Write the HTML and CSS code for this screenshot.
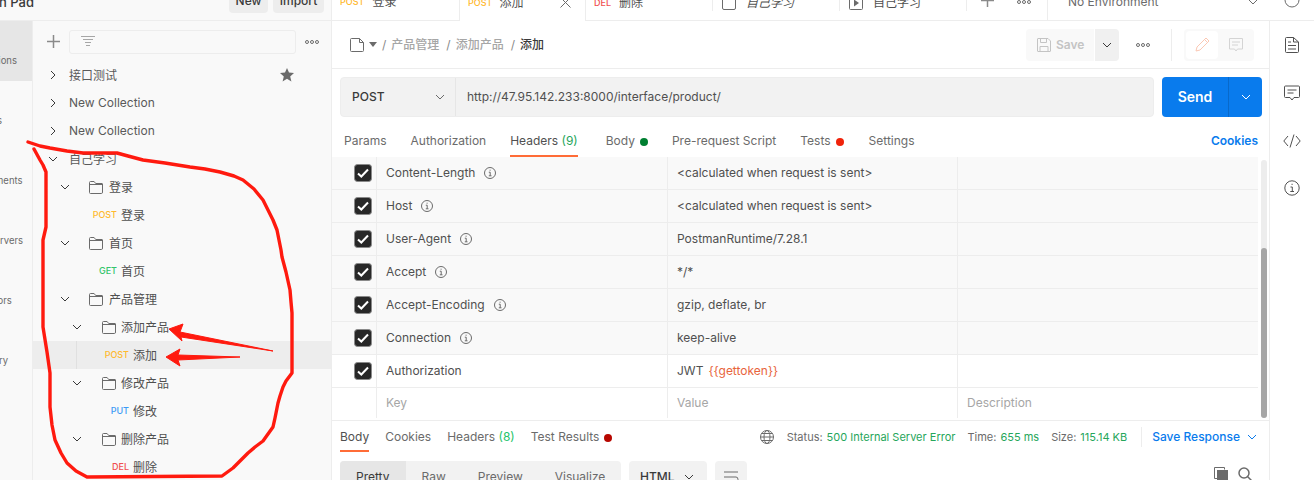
FILE: index.html
```html
<!DOCTYPE html>
<html lang="zh">
<head>
<meta charset="utf-8">
<title>Postman</title>
<link rel="stylesheet" href="styles.css">
</head>
<body>
<svg width="0" height="0" class="defs">
  <defs>
    <symbol id="chev-d" viewBox="0 0 10 10"><path d="M1 3l4 4 4-4" fill="none" stroke="currentColor" stroke-width="1"/></symbol>
    <symbol id="chev-r" viewBox="0 0 10 10"><path d="M3 1l4 4-4 4" fill="none" stroke="currentColor" stroke-width="1"/></symbol>
    <symbol id="folder" viewBox="0 0 14 14"><path d="M.5 12V2.5q0-1 1-1h3.6l1.6 2h6.3q.5 0 .5.5v8q0 1.500-1 1.500H1.500q-1 0-1-1zM.5 4.500h13" fill="none" stroke="#6b6b6b" stroke-width="1"/></symbol>
    <symbol id="info" viewBox="0 0 12 12"><circle cx="6" cy="6" r="5.500" fill="none" stroke="#6b6b6b"/><path d="M4.800 5.200H6.200V8.800M4.800 8.800H7.500M5.600 3.200h1" fill="none" stroke="#6b6b6b"/></symbol>
    <symbol id="check" viewBox="0 0 18 18"><rect x=".5" y=".5" width="17" height="17" rx="3" fill="#282828" stroke="#8a8a8a"/><path d="M4 9.500l3.300 3L14 5.500" fill="none" stroke="#fff" stroke-width="2"/></symbol>
    <symbol id="dots" viewBox="0 0 14 4"><circle cx="2" cy="2" r="1.500" fill="none" stroke="#6b6b6b"/><circle cx="7" cy="2" r="1.500" fill="none" stroke="#6b6b6b"/><circle cx="12" cy="2" r="1.500" fill="none" stroke="#6b6b6b"/></symbol>
  </defs>
</svg>
<div class="app">
  <aside class="left">
    <div class="workspace">
      <span class="ws-name">Scratch Open Pad</span>
      <div class="ws-btns"><span class="ws-btn new">New</span><span class="ws-btn imp">Import</span></div>
    </div>
    <div class="left-body">
      <nav class="rail">
        <div class="rail-item on">Collections</div>
        <div class="rail-item">APIs</div>
        <div class="rail-item">Environments</div>
        <div class="rail-item">Mock Servers</div>
        <div class="rail-item">Monitors</div>
        <div class="rail-item">History</div>
      </nav>
      <div class="panel">
        <div class="panel-tools">
          <svg class="plus" width="13" height="13" viewBox="0 0 13 13"><path d="M6.500 0v13M0 6.500h13" stroke="#8a8a8a" stroke-width="1.500"/></svg>
          <div class="filter">
            <svg width="14" height="12" viewBox="0 0 14 12"><path d="M0 .5h14M2 3.500h10M4 6.500h6M5 9.500h4" stroke="#a6a6a6"/></svg>
          </div>
          <svg class="more" width="14" height="4"><use href="#dots"/></svg>
        </div>
        <div class="tree">
          <div class="row l0"><svg class="chev"><use href="#chev-r"/></svg><span class="nm">接口测试</span>
            <svg class="star" width="14" height="14" viewBox="0 0 14 14"><path d="M7 0l2 4.600 5 .5-3.800 3.300 1.200 5L7 10.700 2.600 13.400l1.200-5L0 5.100l5-.5z" fill="#6b6b6b"/></svg></div>
          <div class="row l0"><svg class="chev"><use href="#chev-r"/></svg><span class="nm lat">New Collection</span></div>
          <div class="row l0"><svg class="chev"><use href="#chev-r"/></svg><span class="nm lat">New Collection</span></div>
          <div class="row l0"><svg class="chev"><use href="#chev-d"/></svg><span class="nm">自己学习</span></div>
          <div class="row l1"><svg class="chev"><use href="#chev-d"/></svg><svg class="fold"><use href="#folder"/></svg><span class="nm">登录</span></div>
          <div class="row r1"><span class="mth post">POST</span><span class="nm">登录</span></div>
          <div class="row l1"><svg class="chev"><use href="#chev-d"/></svg><svg class="fold"><use href="#folder"/></svg><span class="nm">首页</span></div>
          <div class="row r1"><span class="mth get">GET</span><span class="nm">首页</span></div>
          <div class="row l1"><svg class="chev"><use href="#chev-d"/></svg><svg class="fold"><use href="#folder"/></svg><span class="nm">产品管理</span></div>
          <div class="row l2"><svg class="chev"><use href="#chev-d"/></svg><svg class="fold"><use href="#folder"/></svg><span class="nm">添加产品</span></div>
          <div class="row sel"><div class="guide"><span class="mth post">POST</span><span class="nm">添加</span></div></div>
          <div class="row l2"><svg class="chev"><use href="#chev-d"/></svg><svg class="fold"><use href="#folder"/></svg><span class="nm">修改产品</span></div>
          <div class="row r2"><span class="mth put">PUT</span><span class="nm">修改</span></div>
          <div class="row l2"><svg class="chev"><use href="#chev-d"/></svg><svg class="fold"><use href="#folder"/></svg><span class="nm">删除产品</span></div>
          <div class="row r2"><span class="mth del">DEL</span><span class="nm">删除</span></div>
        </div>
      </div>
    </div>
  </aside>
  <main class="main">
    <div class="tabs">
      <div class="tab w1"><span class="tm post">POST</span><span>登录</span></div>
      <div class="tab active"><span class="tm post">POST</span><span>添加</span>
        <svg class="tab-x" width="11" height="11" viewBox="0 0 11 11"><path d="M.5.500l10 10M10.500.500l-10 10" stroke="#6b6b6b"/></svg></div>
      <div class="tab w2"><span class="tm del">DEL</span><span>删除</span></div>
      <div class="tab w3"><svg class="tab-ic" width="14" height="14" viewBox="0 0 14 14"><rect x=".5" y=".5" width="13" height="13" rx="1.500" fill="none" stroke="#6b6b6b"/></svg><em>自己学习</em></div>
      <div class="tab w3"><svg class="tab-ic" width="14" height="14" viewBox="0 0 14 14"><rect x=".5" y=".5" width="13" height="13" rx="1" fill="none" stroke="#6b6b6b"/><path d="M5 3.500l5 3.500-5 3.500z" fill="#6b6b6b"/></svg><span>自己学习</span></div>
      <div class="tab-add">
        <svg width="13" height="13" viewBox="0 0 13 13"><path d="M6.500 0v13M0 6.500h13" stroke="#8a8a8a" stroke-width="1.500"/></svg>
        <svg class="tab-more" width="14" height="4"><use href="#dots"/></svg>
      </div>
      <div class="envsel">
        <span>No Environment</span>
        <svg class="env-chev"><use href="#chev-d"/></svg>
      </div>
      <div class="eye"><svg width="16" height="16" viewBox="0 0 16 16"><circle cx="8" cy="8" r="7" fill="none" stroke="#6b6b6b"/></svg></div>
    </div>
    <div class="below">
      <section class="content">
        <div class="crumbs">
          <svg class="doc" width="14" height="14" viewBox="0 0 14 14"><path d="M.5 1.500q0-1 1-1h8l4 4v8q0 1-1 1h-11q-1 0-1-1zM9.500.500v4h4" fill="none" stroke="#6b6b6b"/></svg>
          <span class="caret"></span>
          <span class="sep">/</span><span class="crumb">产品管理</span>
          <span class="sep">/</span><span class="crumb">添加产品</span>
          <span class="sep">/</span><span class="crumb cur">添加</span>
          <div class="actions">
            <div class="save"><svg width="14" height="14" viewBox="0 0 14 14"><path d="M.5 1q0-.5.500-.5h10l2.500 2.500v10q0 .5-.5.500H1q-.5 0-.5-.5zM3.500.500v4h6v-4M3 13.500v-5h8v5" fill="none" stroke="#c4c4c4"/></svg><span>Save</span></div>
            <div class="save-arrow"><svg class="chev"><use href="#chev-d"/></svg></div>
            <svg class="act-more" width="14" height="4"><use href="#dots"/></svg>
            <div class="act-div"></div>
            <div class="modes">
              <div class="mode on"><svg width="15" height="15" viewBox="0 0 15 15"><path d="M1 14l1-4L11 1l3 3-9 9zM9.500 2.500l3 3" fill="none" stroke="#fbc8b4"/></svg></div>
              <div class="mode"><svg width="14" height="14" viewBox="0 0 14 14"><path d="M.5.500h13v10.500H8.500L7 13l-1.500-2H.5zM3 4h8M3 7h6" fill="none" stroke="#d4d4d4"/></svg></div>
            </div>
          </div>
        </div>
        <div class="urlrow">
          <div class="urlbox">
            <div class="method"><b>POST</b><svg class="chev"><use href="#chev-d"/></svg></div>
            <div class="url">http://47.95.142.233:8000/interface/product/</div>
          </div>
          <div class="send"><span class="send-l">Send</span><span class="send-r"><svg class="chev"><use href="#chev-d"/></svg></span></div>
        </div>
        <div class="reqtabs">
          <span class="rt p1">Params</span>
          <span class="rt p2">Authorization</span>
          <span class="rt p3 cur">Headers <i class="cnt">(9)</i></span>
          <span class="rt p4">Body<i class="dot green"></i></span>
          <span class="rt p5">Pre-request Script</span>
          <span class="rt p6">Tests<i class="dot red"></i></span>
          <span class="rt">Settings</span>
          <span class="cookies">Cookies</span>
        </div>
        <div class="tablewrap">
          <div class="table">
            <div class="tr"><div class="c0"><svg class="cb"><use href="#check"/></svg></div><div class="c1">Content-Length<svg class="inf"><use href="#info"/></svg></div><div class="c2">&lt;calculated when request is sent&gt;</div><div class="c3"></div></div>
            <div class="tr"><div class="c0"><svg class="cb"><use href="#check"/></svg></div><div class="c1">Host<svg class="inf"><use href="#info"/></svg></div><div class="c2">&lt;calculated when request is sent&gt;</div><div class="c3"></div></div>
            <div class="tr"><div class="c0"><svg class="cb"><use href="#check"/></svg></div><div class="c1">User-Agent<svg class="inf"><use href="#info"/></svg></div><div class="c2">PostmanRuntime/7.28.1</div><div class="c3"></div></div>
            <div class="tr"><div class="c0"><svg class="cb"><use href="#check"/></svg></div><div class="c1">Accept<svg class="inf"><use href="#info"/></svg></div><div class="c2">*/*</div><div class="c3"></div></div>
            <div class="tr"><div class="c0"><svg class="cb"><use href="#check"/></svg></div><div class="c1">Accept-Encoding<svg class="inf"><use href="#info"/></svg></div><div class="c2">gzip, deflate, br</div><div class="c3"></div></div>
            <div class="tr"><div class="c0"><svg class="cb"><use href="#check"/></svg></div><div class="c1">Connection<svg class="inf"><use href="#info"/></svg></div><div class="c2">keep-alive</div><div class="c3"></div></div>
            <div class="tr wh"><div class="c0"><svg class="cb"><use href="#check"/></svg></div><div class="c1">Authorization</div><div class="c2">JWT<span class="var">{{gettoken}}</span></div><div class="c3"></div></div>
            <div class="tr wh ph"><div class="c0"></div><div class="c1">Key</div><div class="c2">Value</div><div class="c3">Description</div></div>
          </div>
          <div class="scroll"><div class="track"><div class="thumb"></div></div></div>
        </div>
        <div class="resbar">
          <span class="rs cur">Body</span>
          <span class="rs r2n">Cookies</span>
          <span class="rs r3n">Headers <i class="cnt2">(8)</i></span>
          <span class="rs">Test Results<i class="dot dred"></i></span>
          <div class="resmeta">
            <svg class="globe" width="14" height="14" viewBox="0 0 14 14"><g fill="none" stroke="#6b6b6b"><circle cx="7" cy="7" r="6.500"/><ellipse cx="7" cy="7" rx="3" ry="6.500"/><path d="M.5 7h13M1.500 3.500h11M1.500 10.500h11"/></g></svg>
            <span class="lab">Status:</span><span class="val m1">500 Internal Server Error</span>
            <span class="lab">Time:</span><span class="val m2">655 ms</span>
            <span class="lab">Size:</span><span class="val last">115.14 KB</span>
            <div class="res-div"></div>
            <span class="saveres">Save Response</span><svg class="chev blue"><use href="#chev-d"/></svg>
          </div>
        </div>
        <div class="restools">
          <div class="seg"><span class="sg on">Pretty</span><span class="sg">Raw</span><span class="sg">Preview</span><span class="sg">Visualize</span></div>
          <div class="lang"><b>HTML</b><svg class="chev"><use href="#chev-d"/></svg></div>
          <div class="wrapb"><svg width="16" height="12" viewBox="0 0 16 12"><path d="M1 1h14M1 6h12q2 0 2 2.500T13 11h-3M1 11h5" fill="none" stroke="#6b6b6b"/></svg></div>
          <div class="tools-r">
            <svg width="14" height="14" viewBox="0 0 14 14"><path d="M.5.500h10v2" fill="none" stroke="#6b6b6b"/><rect x="3" y="3" width="11" height="11" fill="#6b6b6b"/><path d="M.5.500v11H3" fill="none" stroke="#6b6b6b"/></svg>
            <svg width="14" height="14" viewBox="0 0 14 14"><circle cx="6" cy="6" r="5" fill="none" stroke="#6b6b6b" stroke-width="1.500"/><path d="M9.500 9.500l4 4" stroke="#6b6b6b" stroke-width="1.500"/></svg>
          </div>
        </div>
      </section>
      <aside class="rrail">
        <svg width="14" height="16" viewBox="0 0 14 16"><path d="M.5 1.500q0-1 1-1h7l5 4.500v9.500q0 1-1 1h-11q-1 0-1-1zM8.500.500v4.500h5M3 5h3M3 8.500h8M3 12h8" fill="none" stroke="#505050"/></svg>
        <svg width="16" height="16" viewBox="0 0 16 16"><path d="M.5 2q0-1 1-1h13q1 0 1 1v9.500q0 1-1 1H10L8 15l-2-2.500H1.500q-1 0-1-1zM3.500 5h9M3.500 8h6" fill="none" stroke="#505050"/></svg>
        <svg class="code" width="18" height="14" viewBox="0 0 18 14"><path d="M5 2L.8 7 5 12M13 2l4.200 5L13 12M11 .5L7 13.500" fill="none" stroke="#505050"/></svg>
        <svg width="16" height="16" viewBox="0 0 16 16"><circle cx="8" cy="8" r="7.200" fill="none" stroke="#505050"/><path d="M6.500 7H8.300V11.500M6.300 11.500H10M7.500 4.300h1.200" fill="none" stroke="#505050"/></svg>
      </aside>
    </div>
  </main>
</div>
<svg class="scribble" width="1314" height="480" viewBox="0 0 1314 480">
  <path d="M28 142L40 146L50 148L67 151L83 153L117 153L128 156L143 160L165 163L190 167L205 169L220 172L234 176L243 180L254 189L263 200L268 210L273 220L277 230L279 240L281 250L282 257L286 272L290 290L291 302L292 313L292 373L286 381L283 387L280 396L278 403L275 418L273 427L268 434L263 441L255 447L248 453L240 461L233 468L222 476L87 477L76 471L67 463L61 453L55 440L52 425L50 407L50 373L47 352L43 327L43 240L46 227L46 172L43 165L40 160L34 149" fill="none" stroke="#ff1a0f" stroke-width="3.400" stroke-linejoin="round" stroke-linecap="round"/>
  <path d="M169 329L183 324L180 332L273 351L181 337L182 341z" fill="#ff1a0f" stroke="#ff1a0f" stroke-width="1"/>
  <path d="M166 357L180 349L178 355L240 357L178 360L180 366z" fill="#ff1a0f" stroke="#ff1a0f" stroke-width="1"/>
</svg>
</body>
</html>
```
FILE: styles.css
```css
* { box-sizing: border-box; }
html, body { margin: 0; padding: 0; height: 100%; overflow: hidden; background: #fff; }
body { font: 12px/16px Inter, "Noto Sans CJK SC", sans-serif; color: #505050; position: relative; }
i, em { font-style: normal; }
.defs { position: absolute; }
.scribble { position: absolute; left: 0; top: 0; pointer-events: none; }

.app { display: flex; height: 500px; margin-top: -20px; }

/* left column */
.left { width: 332px; flex: none; border-right: 1px solid #ededed; background: #f9f9f9; display: flex; flex-direction: column; }
.workspace { height: 41px; flex: none; border-bottom: 1px solid #ededed; display: flex; align-items: flex-start; justify-content: flex-end; padding: 4px 7px 0 0; overflow: hidden; position: relative; }
.ws-name { font-size: 13px; font-weight: 500; line-height: 36px; margin-right: 195px; color: #3a3a3a; white-space: nowrap; flex: none; }
.ws-btns { display: flex; gap: 5px; flex: none; }
.ws-btn { height: 29px; background: #ededed; border-radius: 4px; line-height: 34px; font-weight: 500; color: #3a3a3a; text-align: center; }
.new { width: 39px; }
.imp { width: 51px; }
.left-body { flex: 1; display: flex; min-height: 0; }
.rail { width: 81px; margin-left: -48px; flex: none; border-right: 1px solid #ededed; }
.rail-item { height: 60px; text-align: center; font-size: 9.500px; color: #6b6b6b; padding-top: 32px; white-space: nowrap; }
.rail-item.on { background: #e6e6e6; }
.panel { flex: 1; min-width: 0; }
.panel-tools { height: 41px; display: flex; align-items: center; padding-left: 14px; }
.filter { width: 227px; height: 24px; margin-left: 9px; border: 1px solid #ededed; border-radius: 3px; background: #f9f9f9; display: flex; align-items: center; padding-left: 11px; }
.more { margin-left: 9px; }
.tree { margin-top: -1px; }
.row { height: 28px; display: flex; align-items: center; color: #505050; white-space: nowrap; }
.nm { padding-top: 2px; }
.nm.lat { padding-top: 0; }
.chev { width: 10px; height: 10px; flex: none; color: #3a3a3a; }
.l0 { padding-left: 15px; }
.l0 .chev { margin-right: 11px; }
.l0 .nm { color: #5a5a5a; }
.l1 { padding-left: 27px; }
.l1 .chev { margin-right: 19px; }
.l2 { padding-left: 39px; }
.l2 .chev { margin-right: 20px; }
.fold { width: 14px; height: 14px; flex: none; margin-right: 6px; }
.l2 .fold { margin-right: 5px; }
.star { margin-left: auto; margin-right: 37px; }
.mth { width: 30px; flex: none; text-align: right; font-size: 9px; font-weight: 500; margin-right: 4px; }
.r1 { padding-left: 54px; }
.r2 { padding-left: 66px; }
.post { color: #ffb92e; }
.get { color: #33c56c; }
.put { color: #3d9bf5; }
.del { color: #f05050; }
.sel { background: #ededed; padding-left: 43px; }
.guide { height: 100%; border-left: 1px solid #e0e0e0; padding-left: 22px; display: flex; align-items: center; }

/* main */
.main { flex: 1; min-width: 0; display: flex; flex-direction: column; }
.tabs { height: 41px; flex: none; border-bottom: 1px solid #ededed; display: flex; align-items: flex-start; background: #fff; }
.tab { height: 40px; padding-top: 4px; display: flex; align-items: center; position: relative; white-space: nowrap; color: #505050; }
.tm { font-size: 9px; font-weight: 500; margin-right: 8px; }
.w1 { width: 127px; padding-left: 8px; }
.active { width: 127px; padding-left: 8px; background: #fff; border-left: 1px solid #ededed; border-right: 1px solid #ededed; height: 41px; }
.active .tm { margin-right: 7px; }
.tab-x { position: absolute; left: 100px; top: 17px; }
.w2 { width: 127px; padding-left: 8px; border-right: 1px solid #ededed; height: 31px; padding-top: 14px; }
.w3 { width: 127px; padding-left: 9px; border-right: 1px solid #ededed; height: 31px; padding-top: 14px; }
.w3 em { font-style: italic; }
.tab-ic { margin-right: 10px; }
.tab-add { width: 80px; display: flex; align-items: center; padding-left: 14px; height: 31px; padding-top: 9px; }
.tab-more { margin-left: 23px; margin-top: 4px; }
.envsel { width: 223px; border-left: 1px solid #ededed; height: 40px; display: flex; align-items: center; padding: 4px 0 0 20px; color: #6b6b6b; }
.env-chev { width: 10px; height: 10px; color: #6b6b6b; margin-left: auto; margin-right: 12px; }
.eye { flex: 1; padding-top: 12px; display: flex; justify-content: center; }

.below { flex: 1; display: flex; min-height: 0; }
.content { width: 937px; flex: none; background: #fff; }
.rrail { flex: 1; border-left: 1px solid #ededed; display: flex; flex-direction: column; align-items: center; padding-top: 16px; gap: 32px; background: #fff; }
.code { margin-top: 1px; }

.crumbs { height: 48px; border-bottom: 1px solid #ededed; display: flex; align-items: center; padding-left: 18px; padding-right: 15px; }
.doc { margin-right: 5px; }
.caret { width: 0; height: 0; border-left: 4px solid transparent; border-right: 4px solid transparent; border-top: 5px solid #6b6b6b; margin-right: 5px; }
.sep { color: #8a8a8a; margin-right: 5px; }
.crumb { color: #a6a6a6; font-weight: 500; margin-right: 7px; }
.crumb.cur { color: #3a3a3a; }
.actions { margin-left: auto; display: flex; align-items: center; }
.save { width: 68px; height: 32px; background: #f9f9f9; border-radius: 4px 0 0 4px; display: flex; align-items: center; padding-left: 11px; gap: 5px; font-weight: 600; color: #c4c4c4; }
.save-arrow { width: 24px; height: 32px; margin-left: 1px; background: #f0f0f0; border-radius: 0 4px 4px 0; display: flex; align-items: center; justify-content: center; }
.act-more { margin-left: 17px; }
.act-div { width: 1px; height: 32px; background: #ededed; margin-left: 21px; }
.modes { margin-left: 12px; width: 70px; height: 32px; background: #f9f9f9; border-radius: 4px; display: flex; align-items: center; padding: 2px; }
.mode { width: 32px; height: 28px; display: flex; align-items: center; justify-content: center; }
.mode.on { background: #fff; border-radius: 4px; margin-right: 2px; }

.urlrow { display: flex; padding: 8px 7px 0 8px; height: 48px; }
.urlbox { width: 814px; height: 40px; background: #f2f2f2; border: 1px solid #ededed; border-radius: 4px; display: flex; align-items: center; }
.method { width: 115px; height: 100%; border-right: 1px solid #e6e6e6; display: flex; align-items: center; justify-content: space-between; padding: 0 10px 0 11px; }
.method b { font-weight: 500; color: #3a3a3a; }
.method .chev { color: #6b6b6b; }
.url { padding-left: 11px; color: #505050; }
.send { margin-left: 8px; width: 100px; height: 40px; background: #097bed; border-radius: 4px; display: flex; color: #fff; font-size: 14px; font-weight: 600; }
.send-l { width: 67px; border-right: 1px solid #0869ca; text-align: center; line-height: 40px; }
.send-r { flex: 1; display: flex; align-items: center; justify-content: center; }
.send-r .chev { color: #fff; }

.reqtabs { height: 40px; display: flex; padding: 9px 0 0 12px; color: #6b6b6b; position: relative; }
.rt { height: 31px; line-height: 30px; white-space: nowrap; }
.p1 { margin-right: 24px; }
.p2 { margin-right: 24px; }
.p3 { margin-right: 28px; }
.p4 { margin-right: 24px; }
.p5 { margin-right: 24px; }
.p6 { margin-right: 25px; }
.rt.cur { color: #505050; border-bottom: 2px solid #ff6c37; }
.cnt { color: #26a65b; }
.cnt2 { color: #26c46a; }
.dot { display: inline-block; width: 8px; height: 8px; border-radius: 50%; margin-left: 5px; vertical-align: -0.5px; }
.green { background: #007f31; }
.red { background: #f0230a; }
.dred { background: #b70700; }
.cookies { margin-left: auto; margin-right: 11px; line-height: 30px; color: #097bed; font-weight: 600; }

.tablewrap { display: flex; height: 264px; border-bottom: 1px solid #ededed; }
.table { width: 926px; flex: none; }
.tr { height: 33px; display: flex; background: #f9f9f9; border-bottom: 1px solid #ededed; align-items: stretch; }
.tr.wh { background: #fff; }
.ph { color: #a6a6a6; padding-bottom: 2px; }
.c0 { width: 45px; flex: none; border-right: 1px solid #ededed; display: flex; align-items: center; padding-left: 22px; }
.c1 { width: 291px; flex: none; border-right: 1px solid #ededed; padding-left: 9px; display: flex; align-items: center; }
.c2 { width: 290px; flex: none; border-right: 1px solid #ededed; padding-left: 9px; display: flex; align-items: center; }
.c3 { flex: 1; padding-left: 9px; display: flex; align-items: center; }
.cb { width: 18px; height: 18px; }
.inf { width: 12px; height: 12px; margin-left: 9px; }
.var { color: #e8643c; margin-left: 5px; }
.scroll { flex: 1; padding: 3px 2px 0 3px; }
.track { width: 6px; height: 258px; background: #ededed; border-radius: 3px; padding-top: 88px; }
.thumb { width: 6px; height: 170px; background: #a6a6a6; border-radius: 3px; }

.resbar { height: 40px; display: flex; align-items: flex-start; padding: 0 12px 0 8px; color: #6b6b6b; }
.rs { height: 31px; line-height: 32px; white-space: nowrap; margin-right: 16px; }
.rs.cur { color: #505050; border-bottom: 2px solid #ff6c37; }
.resmeta { margin-left: auto; display: flex; align-items: center; height: 32px; font-size: 11px; white-space: nowrap; }
.globe { margin-right: 13px; }
.lab { color: #6b6b6b; margin-right: 4px; }
.val { color: #26a65b; margin-right: 12px; }
.val.last { margin-right: 14px; }
.res-div { width: 1px; height: 20px; background: #ededed; margin-right: 10px; }
.saveres { font-size: 12px; font-weight: 500; color: #097bed; margin-right: 7px; }
.chev.blue { color: #097bed; }

.restools { display: flex; padding-left: 8px; padding-right: 17px; }
.seg { width: 281px; height: 32px; background: #f2f2f2; border-radius: 4px; display: flex; overflow: hidden; }
.sg { padding: 0 16px; line-height: 32px; color: #6b6b6b; }
.sg.on { width: 66px; background: #e6e6e6; color: #3a3a3a; }
.lang { width: 78px; height: 32px; margin-left: 8px; background: #f2f2f2; border-radius: 4px; display: flex; align-items: center; justify-content: space-between; padding: 0 13px 0 11px; }
.lang b { font-weight: 500; color: #3a3a3a; }
.wrapb { width: 32px; height: 32px; margin-left: 8px; background: #f2f2f2; border-radius: 4px; display: flex; align-items: center; justify-content: center; }
.tools-r { margin-left: auto; display: flex; gap: 10px; padding-top: 6px; }
```
